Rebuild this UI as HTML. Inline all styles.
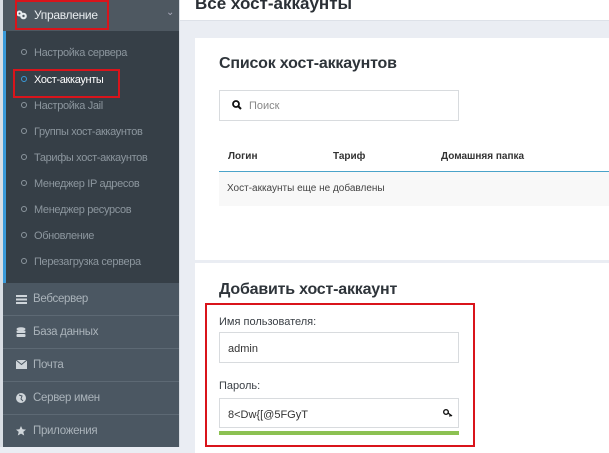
<!DOCTYPE html>
<html><head><meta charset="utf-8"><style>
*{margin:0;padding:0;box-sizing:border-box}
body{width:609px;height:447px;overflow:hidden;background:#eaedf3;font-family:"Liberation Sans",sans-serif;position:relative}
.sb{position:absolute;left:0;top:0;width:180px;height:447px;background:#d9dee4}
.top{position:absolute;left:3px;top:0;width:176px;height:31px;background:#4e5861;color:#e8ecef;font-size:12px;letter-spacing:-0.3px}
.sub{position:absolute;left:3px;top:31px;width:176px;height:254px;background:#363f47;border-left:3px solid #3a9ad9}
.sub div{position:absolute;left:15px;font-size:11px;color:#8c969e;white-space:nowrap;letter-spacing:-0.35px}
.sub div:before{content:"";display:inline-block;width:4px;height:4px;border:1px solid #8c969e;border-radius:50%;margin-right:7px;vertical-align:1px}
.sub div.a{color:#fff}
.sub div.a:before{border-color:#3a9ad9}
.it{position:absolute;left:3px;width:176px;height:33px;background:#4b5762;border-top:1px solid #5d6974;color:#aab3ba;font-size:11.5px;line-height:32px;padding-left:30px;letter-spacing:-0.3px}
.it svg{position:absolute;left:13px;top:11px}
.hdr{position:absolute;left:180px;top:0;width:429px;height:21px;background:#fff;border-bottom:1px solid #dde1e8}
.hdr span{position:absolute;left:15px;top:-6px;font-size:17px;font-weight:bold;color:#2b3036}
.card{position:absolute;left:195px;width:420px;background:#fff}
h2{position:absolute;font-size:16px;font-weight:bold;color:#2e343a;letter-spacing:-0.2px}
.red{position:absolute;border:2px solid #d9141b}
.lbl{position:absolute;font-size:11px;color:#3b4046}
.inp{position:absolute;border:1px solid #d8dbde;background:#fff;font-size:11px;color:#333}
</style></head><body>
<div class="sb"></div>
<div class="top"><svg style="position:absolute;left:13px;top:10px" width="11" height="10" viewBox="0 0 11 10"><circle cx="3.5" cy="3.5" r="3" fill="#e8ecef"/><circle cx="7.5" cy="6" r="3.3" fill="#e8ecef"/><circle cx="7.5" cy="6" r="1.2" fill="#4e5861"/><circle cx="3.5" cy="3.5" r="1" fill="#4e5861"/></svg><span style="position:absolute;left:31px;top:8px">Управление</span><span style="position:absolute;left:163px;top:7px;font-size:10px;color:#aab">&#8964;</span></div>
<div class="sub">
<div style="top:16px">Настройка сервера</div>
<div class="a" style="top:43px">Хост-аккаунты</div>
<div style="top:69px">Настройка Jail</div>
<div style="top:95px">Группы хост-аккаунтов</div>
<div style="top:121px">Тарифы хост-аккаунтов</div>
<div style="top:147px">Менеджер IP адресов</div>
<div style="top:173px">Менеджер ресурсов</div>
<div style="top:199px">Обновление</div>
<div style="top:225px">Перезагрузка сервера</div>
</div>
<div class="it" style="top:283px;border-top:0"><svg width="11" height="10"><rect y="1" width="11" height="2" fill="#cfd5da"/><rect y="4.5" width="11" height="2" fill="#cfd5da"/><rect y="8" width="11" height="2" fill="#cfd5da"/></svg>Вебсервер</div>
<div class="it" style="top:315px"><svg width="10" height="11"><ellipse cx="5" cy="2" rx="4.5" ry="1.8" fill="#cfd5da"/><rect x=".5" y="3.5" width="9" height="2.5" rx="1" fill="#cfd5da"/><rect x=".5" y="7" width="9" height="3" rx="1" fill="#cfd5da"/></svg>База данных</div>
<div class="it" style="top:348px"><svg width="11" height="9"><rect width="11" height="9" fill="#cfd5da"/><path d="M0 0l5.5 4.5L11 0" stroke="#4b5762" fill="none"/></svg>Почта</div>
<div class="it" style="top:381px"><svg width="10" height="10"><circle cx="5" cy="5" r="5" fill="#cfd5da"/><path d="M3 2l3 1-1 3 2 2" stroke="#4b5762" fill="none"/></svg>Сервер имен</div>
<div class="it" style="top:414px"><svg width="10" height="10" viewBox="0 0 10 10"><path d="M5 0l1.5 3.3 3.5.3-2.7 2.3.9 3.6L5 7.6 1.8 9.5l.9-3.6L0 3.6l3.5-.3z" fill="#cfd5da"/></svg>Приложения</div>

<div class="hdr"><span>Все хост-аккаунты</span></div>

<div class="card" style="top:38px;height:222px">
<h2 style="left:24px;top:17px">Список хост-аккаунтов</h2>
<div class="inp" style="left:24px;top:52px;width:240px;height:31px"><svg style="position:absolute;left:12px;top:9px" width="10" height="10"><circle cx="4" cy="4" r="3" stroke="#111" stroke-width="1.8" fill="none"/><path d="M6 6l3 3" stroke="#111" stroke-width="2"/></svg><span style="position:absolute;left:29px;top:9px;color:#888">Поиск</span></div>
<div style="position:absolute;left:33px;top:113px;font-size:10px;font-weight:bold;color:#333">Логин</div>
<div style="position:absolute;left:138px;top:113px;font-size:10px;font-weight:bold;color:#333">Тариф</div>
<div style="position:absolute;left:246px;top:113px;font-size:10px;font-weight:bold;color:#333">Домашняя папка</div>
<div style="position:absolute;left:24px;top:133px;width:400px;height:35px;background:#f8f8f8;border-top:1px solid #4aa3c9;font-size:10px;color:#444;line-height:34px;padding-left:8px">Хост-аккаунты еще не добавлены</div>
</div>

<div class="card" style="top:263px;height:190px">
<h2 style="left:24px;top:18px">Добавить хост-аккаунт</h2>
<div class="lbl" style="left:24px;top:53px">Имя пользователя:</div>
<div class="inp" style="left:24px;top:69px;width:240px;height:31px;padding:10px 0 0 8px">admin</div>
<div class="lbl" style="left:24px;top:117px">Пароль:</div>
<div class="inp" style="left:24px;top:135px;width:240px;height:30px;padding:10px 0 0 8px">8&lt;Dw{[@5FGyT<svg style="position:absolute;right:5px;top:10px" width="10" height="8"><circle cx="3" cy="3" r="2.3" stroke="#111" stroke-width="1.4" fill="none"/><path d="M5 4l4 3M7.5 6l-1 1.5" stroke="#111" stroke-width="1.4"/></svg></div>
<div style="position:absolute;left:24px;top:168px;width:240px;height:4px;background:#8cc152"></div>
</div>

<div class="red" style="left:15px;top:0;width:94px;height:30px"></div>
<div class="red" style="left:13px;top:69px;width:107px;height:29px"></div>
<div class="red" style="left:205px;top:303px;width:270px;height:144px"></div>
</body></html>
